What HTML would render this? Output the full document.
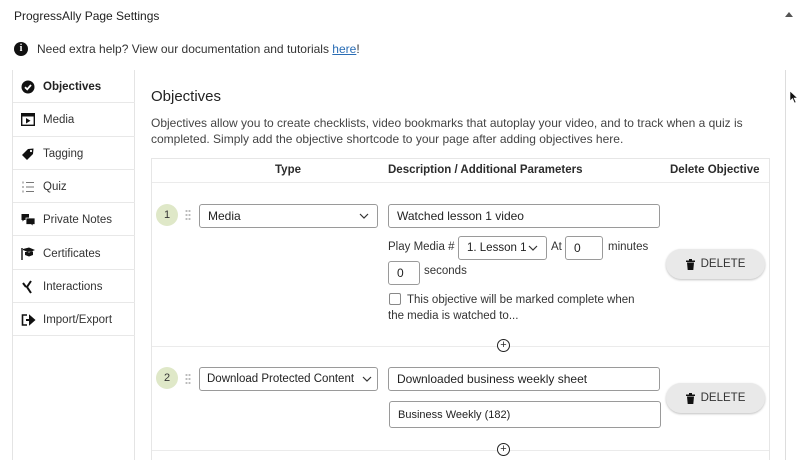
<!DOCTYPE html>
<html><head><meta charset="utf-8"><style>
*{box-sizing:border-box;margin:0;padding:0}
body{width:800px;height:460px;overflow:hidden;background:#fff;font-family:"Liberation Sans",sans-serif;color:#2c2c2c;position:relative;font-size:12px}
.a{position:absolute}
.side{left:12px;top:70px;width:123px;height:390px;border-left:1px solid #e4e4e4;border-right:1px solid #e4e4e4}
.it{position:absolute;left:0;width:122px;height:33.3px;border-bottom:1px solid #e8e8e8;font-size:11.5px;color:#333;padding-left:30px;line-height:34px}
.it svg{position:absolute;left:8px;top:10px}
.box{border:1px solid #9a9a9a;border-radius:3px;background:#fff;font-size:12px;color:#222;padding-left:8px;display:flex;align-items:center}
.num{width:22px;height:22px;border-radius:50%;background:#dfe8c8;font-size:11px;text-align:center;line-height:22px;color:#333}
.del{width:99px;height:30px;border-radius:15px;background:#e9e9e9;box-shadow:0 1px 2px rgba(0,0,0,.25);font-size:11.5px;color:#333;display:flex;align-items:center;justify-content:center;gap:6px}
.chev{position:absolute;right:8px;top:5px}
.grip{width:6px;height:12px;background-image:radial-gradient(circle,#bbb 1px,transparent 1.2px);background-size:3px 4px}
.plus{width:13px;height:13px;border:1.3px solid #222;border-radius:50%;font-size:11px;line-height:10px;text-align:center;background:#fff}
</style></head><body>
<div class="a" style="left:14px;top:9px;font-size:12px;color:#222">ProgressAlly Page Settings</div>
<div class="a" style="left:785px;top:12px;width:0;height:0;border-left:4px solid transparent;border-right:4px solid transparent;border-bottom:5px solid #555"></div>
<div class="a" style="left:14px;top:42px;width:14px;height:14px;border-radius:50%;background:#111;color:#fff;font-size:10px;font-weight:bold;text-align:center;line-height:14px;font-family:'Liberation Serif',serif">i</div>
<div class="a" style="left:37px;top:42px;font-size:12px;color:#333">Need extra help? View our documentation and tutorials <span style="color:#2a6db5;text-decoration:underline">here</span>!</div>
<div class="a" style="left:785px;top:70px;width:1px;height:390px;background:#ddd"></div>
<svg class="a" style="left:789px;top:90px" width="10" height="14"><path d="M1 1 L1 11 L3.5 8.5 L5.5 13 L7 12.3 L5 8 L8.5 8 Z" fill="#111" stroke="#fff" stroke-width=".6"/></svg>
<div class="a side">
<div class="it" style="top:0;font-weight:bold;color:#222"><svg width="14" height="14"><circle cx="7" cy="7" r="6.5" fill="#111"/><path d="M4 7.2 L6.2 9.3 L10 5" stroke="#fff" stroke-width="1.8" fill="none"/></svg>Objectives</div>
<div class="it" style="top:33.3px"><svg width="14" height="13"><rect x=".7" y=".7" width="12.6" height="11.6" fill="none" stroke="#111" stroke-width="1.4"/><rect x="1" y="1" width="12" height="2.5" fill="#111"/><path d="M5 5 L9.5 7.8 L5 10.5Z" fill="#111"/></svg>Media</div>
<div class="it" style="top:66.6px"><svg width="14" height="14"><path d="M1 8 L7 2 L12.5 1.5 L12 7 L6 13 Z" fill="#111"/><circle cx="10" cy="4" r="1.1" fill="#fff"/></svg>Tagging</div>
<div class="it" style="top:99.9px"><svg width="14" height="14"><g stroke="#777" stroke-width="1"><path d="M5 2.5H13M5 7H13M5 11.5H13M2 1.5V3.5M2 6V8M2 10.5V12.5"/></g></svg>Quiz</div>
<div class="it" style="top:133.2px"><svg width="15" height="14"><path d="M0.5 1H8V7H3L1.5 8.5V7H0.5Z" fill="#111"/><path d="M5 5H14V11.5H12V13.5L10 11.5H5Z" fill="#111" stroke="#fff" stroke-width=".8"/></svg>Private Notes</div>
<div class="it" style="top:166.5px"><svg width="15" height="14"><path d="M1 1V13" stroke="#111" stroke-width="1.4"/><path d="M2 2L8 0.5L14 3L8 5.5L2 3Z M4 5V8L8 9.5L12 8V4.5" fill="#111"/></svg>Certificates</div>
<div class="it" style="top:199.8px"><svg width="14" height="14"><path d="M2 3L5 7M10 1L6 7L10 13" stroke="#111" stroke-width="2" fill="none"/></svg>Interactions</div>
<div class="it" style="top:233.1px"><svg width="15" height="14"><path d="M6 2H1.5V12H6" stroke="#111" stroke-width="1.6" fill="none"/><path d="M5 7H10M9 3.5L13 7L9 10.5Z" stroke="#111" stroke-width="2" fill="#111"/></svg>Import/Export</div>
</div>
<div class="a" style="left:151px;top:88px;font-size:15px;color:#222">Objectives</div>
<div class="a" style="left:151px;top:116px;width:620px;font-size:12px;line-height:15.5px;color:#444">Objectives allow you to create checklists, video bookmarks that autoplay your video, and to track when a quiz is completed. Simply add the objective shortcode to your page after adding objectives here.</div>
<div class="a" style="left:151px;top:158px;width:619px;height:302px;border-left:1px solid #e6e6e6;border-right:1px solid #e6e6e6;border-top:1px solid #e6e6e6"></div>
<div class="a" style="left:152px;top:182px;width:617px;height:1px;background:#ebebeb"></div>
<div class="a" style="left:152px;top:346px;width:617px;height:1px;background:#ebebeb"></div>
<div class="a" style="left:275px;top:164px;font-weight:bold;font-size:11.5px">Type</div>
<div class="a" style="left:388px;top:164px;font-weight:bold;font-size:11.5px">Description / Additional Parameters</div>
<div class="a" style="left:670px;top:164px;font-weight:bold;font-size:11.5px">Delete Objective</div>

<div class="a num" style="left:156px;top:204px">1</div>
<div class="a grip" style="left:185px;top:209px"></div>
<div class="a box" style="left:199px;top:204px;width:179px;height:24px">Media<svg class="chev" width="10" height="12"><path d="M1 4L5 8L9 4" stroke="#333" stroke-width="1.2" fill="none"/></svg></div>
<div class="a box" style="left:388px;top:204px;width:272px;height:24px">Watched lesson 1 video</div>
<div class="a" style="left:388px;top:241px;font-size:11.5px;color:#333">Play Media #</div>
<div class="a box" style="left:458px;top:236px;width:89px;height:24px;font-size:11.5px">1. Lesson 1<svg class="chev" width="10" height="12"><path d="M1 4L5 8L9 4" stroke="#333" stroke-width="1.2" fill="none"/></svg></div>
<div class="a" style="left:551px;top:241px;font-size:11.5px;color:#333">At</div>
<div class="a box" style="left:565px;top:236px;width:38px;height:24px">0</div>
<div class="a" style="left:608px;top:241px;font-size:11.5px;color:#333">minutes</div>
<div class="a box" style="left:388px;top:261px;width:32px;height:24px">0</div>
<div class="a" style="left:424px;top:265px;font-size:11.5px;color:#333">seconds</div>
<div class="a" style="left:389px;top:293px;width:12px;height:12px;border:1px solid #888;border-radius:2px"></div>
<div class="a" style="left:407px;top:294px;font-size:11.5px;color:#333">This objective will be marked complete when</div>
<div class="a" style="left:388px;top:310px;font-size:11.5px;color:#333">the media is watched to...</div>
<div class="a del" style="left:666px;top:249px"><svg width="9" height="11"><path d="M0 1.5H9V3H0ZM3 0H6V1.5H3ZM1 3.5H8L7.3 11H1.7Z" fill="#111"/></svg>DELETE</div>
<div class="a plus" style="left:497px;top:339px">+</div>

<div class="a num" style="left:156px;top:367px">2</div>
<div class="a grip" style="left:185px;top:373px"></div>
<div class="a box" style="left:199px;top:367px;width:179px;height:24px;font-size:11.5px;padding-left:7px">Download Protected Content<svg class="chev" width="10" height="12" style="right:5px"><path d="M1 4L5 8L9 4" stroke="#333" stroke-width="1.2" fill="none"/></svg></div>
<div class="a box" style="left:388px;top:367px;width:272px;height:24px">Downloaded business weekly sheet</div>
<div class="a box" style="left:389px;top:401px;width:272px;height:27px;font-size:11px">Business Weekly (182)</div>
<div class="a del" style="left:666px;top:383px"><svg width="9" height="11"><path d="M0 1.5H9V3H0ZM3 0H6V1.5H3ZM1 3.5H8L7.3 11H1.7Z" fill="#111"/></svg>DELETE</div>
<div class="a" style="left:152px;top:450px;width:617px;height:1px;background:#ebebeb"></div>
<div class="a plus" style="left:497px;top:443px">+</div>
</body></html>
